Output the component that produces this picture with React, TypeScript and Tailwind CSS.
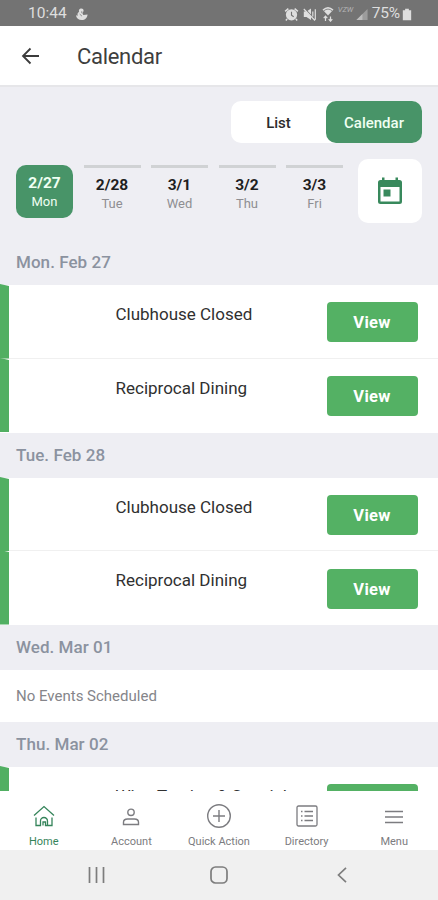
import type { ReactNode } from "react";
import clsx from "clsx";

const days = [
  { date: "2/27", day: "Mon" },
  { date: "2/28", day: "Tue" },
  { date: "3/1", day: "Wed" },
  { date: "3/2", day: "Thu" },
  { date: "3/3", day: "Fri" },
];

const sections = [
  { title: "Mon. Feb 27", events: ["Clubhouse Closed", "Reciprocal Dining"] },
  { title: "Tue. Feb 28", events: ["Clubhouse Closed", "Reciprocal Dining"] },
  { title: "Wed. Mar 01", events: [] },
  { title: "Thu. Mar 02", events: ["Wine Tasting & Specials"] },
];

function StatusBar() {
  return (
    <div className="h-[26px] shrink-0 bg-[#737373] flex items-center pt-[2px] pl-7 pr-[26px] text-[#dedede] text-[15.5px]">
      <span>10:44</span>
      <svg className="ml-[8px]" width="13" height="13" viewBox="0 0 14 14" fill="currentColor">
        <path d="M5.500.8c2.300-1 4.300.6 3.600 2.700L8 5.600l1 2 4.500-.6c-.2 3.500-2.700 6-6.200 6C3.800 13 1.500 11 1 7.800l2 .6C2.300 6.500 2.800 5 4.500 4.400 3.800 2.800 4.200 1.500 5.500.8z" />
        <path d="M5 6.500 7.500 8.800M7.300 3.500v2" stroke="#737373" strokeWidth=".8" />
      </svg>
      <div className="ml-auto flex items-center">
        {/* Alarm */}
        <svg width="15" height="15" viewBox="0 0 24 24">
          <circle cx="12" cy="12.500" r="9" fill="currentColor" />
          <path d="M12 7.500v5.500l3.500 2.500" fill="none" stroke="#737373" strokeWidth="1.800" />
          <path d="M1.800 7 7 2.500M17 2.500 22.200 7M5 19l-2 2.500M19 19l2 2.500" stroke="currentColor" strokeWidth="2.500" />
        </svg>
        {/* Muted */}
        <svg className="ml-1" width="14" height="15" viewBox="0 0 14 15" fill="currentColor">
          <path d="M.8 4.500h2.700L8 1.500v11.500L3.500 10H.8z" />
          <path d="M1.500 1.500 12.500 13.500" stroke="#737373" strokeWidth="1.300" />
          <path d="M.8 2 12 13.500M9.800 4.500v5M12.300 2.200v10.500" stroke="currentColor" strokeWidth="1.200" fill="none" />
        </svg>
        {/* Wifi with transfer arrows */}
        <svg className="ml-[5px]" width="12" height="16" viewBox="0 0 12 16" fill="currentColor">
          <path d="M.5 3.500Q6-1.500 11.500 3.500L6 9.500z" />
          <path d="M1.800 4.800Q6 1.400 10.200 4.800" stroke="#737373" strokeWidth=".8" fill="none" />
          <path d="M3.500 15V10.500M1.700 12.200 3.500 10.200l1.800 2M8.500 10.500V15M6.700 13.200 8.500 15.200l1.800-2" stroke="currentColor" strokeWidth="1.200" fill="none" />
        </svg>
        <span className="ml-[4px] mt-[2px] w-[17px] text-[7.500px] italic leading-3 self-start text-[#b5b5b5]">VZW</span>
        <svg className="ml-[1px]" width="12" height="13" viewBox="0 0 13 14">
          <path d="M.5 13 12.500 1v12z" fill="#9c9c9c" />
          <path d="M.5 13 7 6.500V13z" fill="#bdbdbd" />
        </svg>
        <span className="ml-[4px] tracking-[-0.2px]">75%</span>
        <svg className="ml-[2px]" width="10" height="13" viewBox="0 0 10 14" fill="currentColor">
          <path d="M3 .8h4v1.700H9.500V13.200H.5V2.500H3z" />
        </svg>
      </div>
    </div>
  );
}

function Header() {
  return (
    <header className="h-[59px] shrink-0 bg-white flex items-center pl-[21px]">
      <svg width="20" height="18" viewBox="0 0 20 18" fill="none" stroke="#3c3c3c" strokeWidth="1.800">
        <path d="M18 9H2M9.500 1.500 2 9l7.500 7.500" />
      </svg>
      <h1 className="ml-9 pt-[3px] text-[22px] leading-none tracking-[-0.3px] font-normal text-[#3e3e3e]">Calendar</h1>
    </header>
  );
}

function ViewToggle() {
  return (
    <div className="flex ml-auto w-[191px] h-[42px] bg-white rounded-[10px] text-[15px]">
      <button className="flex-1 pt-[2px] font-medium text-[#2c2c2c]">List</button>
      <button className="w-[96px] pt-[2px] rounded-[10px] bg-[#489468] font-medium text-[#effff2]">Calendar</button>
    </div>
  );
}

function DayStrip() {
  return (
    <div className="flex mt-4 items-start">
      <div className="flex gap-[10.500px] pt-[6px]">
        {days.map((d, i) => (
          <button
            key={d.date}
            className={clsx(
              "w-[57px] flex flex-col items-center",
              i === 0
                ? "h-[53px] pt-[9px] rounded-[10px] bg-[#489468] text-[#effff2]"
                : "h-14 pt-[8px] border-t-[3px] border-[#d0d2d4] text-[#1f1f1f]"
            )}
          >
            <span className="text-[15.500px] leading-[18px] font-bold">{d.date}</span>
            <span className={clsx("text-[13px] leading-[20px]", i !== 0 && "text-[#8e8e92]")}>{d.day}</span>
          </button>
        ))}
      </div>
      <button className="ml-auto w-[64px] h-[64px] rounded-[10px] bg-white flex items-center justify-center">
        <svg width="26" height="28" viewBox="0 0 26 28" fill="#38895c">
          <path fillRule="evenodd" d="M5 .5h2.500V3h11V.5H21V3h1.500a2.500 2.500 0 012.500 2.500v19a2.500 2.500 0 01-2.500 2.500h-19A2.500 2.500 0 011 24.500v-19A2.500 2.500 0 013.500 3H5zM3.500 10v14.500h19V10z" />
          <path d="M6.500 12.500h7v7h-7z" />
        </svg>
      </button>
    </div>
  );
}

function EventRow({ title, last }: { title: string; last: boolean }) {
  return (
    <div className={clsx("h-[73.75px] shrink-0 bg-white flex items-start", !last && "border-b border-[#f0f0f0]")}>
      <svg className="-mt-px shrink-0" width="9" height="74.500" viewBox="0 0 9 74.500" fill="#51af62">
        <path d="M0 0 9 2V74.500H0z" />
      </svg>
      <span className="ml-[106.500px] pt-[19px] whitespace-nowrap text-[17px] leading-5 text-[#303030]">{title}</span>
      <button className="ml-auto mr-[20.500px] mt-[17.250px] w-[91px] h-10 pt-[3px] rounded-[4px] bg-[#54b164] text-white text-[16.500px] tracking-[0.3px] font-bold">
        View
      </button>
    </div>
  );
}

function NavItem({ label, active, children }: { label: string; active?: boolean; children: ReactNode }) {
  return (
    <button className={clsx("flex-1 flex flex-col items-center text-[11px]", active ? "text-[#35845a]" : "text-[#7c7c80]")}>
      <span className="h-[50px] flex items-center justify-center">{children}</span>
      <span className="-mt-[6px] leading-[14px]">{label}</span>
    </button>
  );
}

function TabBar() {
  return (
    <nav className="h-[59px] shrink-0 bg-white flex">
      <NavItem label="Home" active>
        <svg width="22" height="22" viewBox="0 0 22 22" fill="none" stroke="currentColor" strokeWidth="1.300">
          <path d="M1 10.500 11 1.500l10 9" />
          <path d="M3 12.500V20.500h4.500v-4.500a3.500 3.500 0 017 0v4.500H19v-8M10 20.500v-3.500h2.500v3.500h2" />
        </svg>
      </NavItem>
      <NavItem label="Account">
        <svg className="mt-[2px]" width="18" height="18" viewBox="0 0 18 18" fill="none" stroke="currentColor" strokeWidth="1.400">
          <circle cx="9" cy="4.300" r="3.200" />
          <path d="M1.500 16.500v-2.300c0-2 2-3.200 4-3.200h7c2 0 4 1.200 4 3.200v2.300z" />
        </svg>
      </NavItem>
      <NavItem label="Quick Action">
        <svg width="26" height="26" viewBox="0 0 26 26" fill="none" stroke="currentColor" strokeWidth="1.400">
          <circle cx="13" cy="13" r="11.300" />
          <path d="M13 7v12M7 13h12" />
        </svg>
      </NavItem>
      <NavItem label="Directory">
        <svg width="22" height="22" viewBox="0 0 22 22" fill="none" stroke="currentColor" strokeWidth="1.300">
          <rect x="1" y="1" width="20" height="20" rx="1.500" />
          <path d="M8.500 6.500H17M8.500 11H17M8.500 15.500H17M5 6.500h1.500M5 11h1.500M5 15.500h1.500" />
        </svg>
      </NavItem>
      <NavItem label="Menu">
        <svg className="mt-[2px]" width="18" height="14" viewBox="0 0 18 14" stroke="currentColor" strokeWidth="1.400">
          <path d="M0 1.500h18M0 7h18M0 12.500h18" />
        </svg>
      </NavItem>
    </nav>
  );
}

function SystemNav() {
  return (
    <div className="h-[50px] shrink-0 bg-[#f0f0f0] flex items-center text-[#7d7d7d]">
      <svg className="ml-[88px]" width="17" height="16" viewBox="0 0 17 16" stroke="currentColor" strokeWidth="1.700">
        <path d="M1.500 0v16M8.500 0v16M15.500 0v16" />
      </svg>
      <svg className="ml-[105px]" width="18" height="18" viewBox="0 0 18 18" fill="none" stroke="currentColor" strokeWidth="1.700">
        <rect x="1" y="1" width="16" height="16" rx="4.500" />
      </svg>
      <svg className="ml-[109px]" width="10" height="16" viewBox="0 0 10 16" fill="none" stroke="currentColor" strokeWidth="1.700">
        <path d="M9 .8 1.500 8 9 15.200" />
      </svg>
    </div>
  );
}

export default function App() {
  return (
    <div className="w-full h-[900px] flex flex-col overflow-hidden bg-[#eeeef3] font-[Roboto,sans-serif]">
      <StatusBar />
      <Header />
      <main className="flex-1 min-h-0 flex flex-col overflow-hidden">
        <div className="h-[155px] shrink-0 border-t-2 border-[#e6e6e9] px-4 pt-[14px]">
          <ViewToggle />
          <DayStrip />
        </div>
        {sections.map((section) => (
          <section key={section.title} className="shrink-0">
            <h2 className="h-[45px] pl-4 pt-[12px] text-[17px] leading-5 tracking-[0.05px] font-medium text-[#8b929f]">
              {section.title}
            </h2>
            {section.events.map((title, i) => (
              <EventRow key={title} title={title} last={i === section.events.length - 1} />
            ))}
            {section.events.length === 0 && (
              <p className="h-[52px] bg-white pl-4 leading-[53px] text-[15px] text-[#85858a]">No Events Scheduled</p>
            )}
          </section>
        ))}
      </main>
      <TabBar />
      <SystemNav />
    </div>
  );
}
